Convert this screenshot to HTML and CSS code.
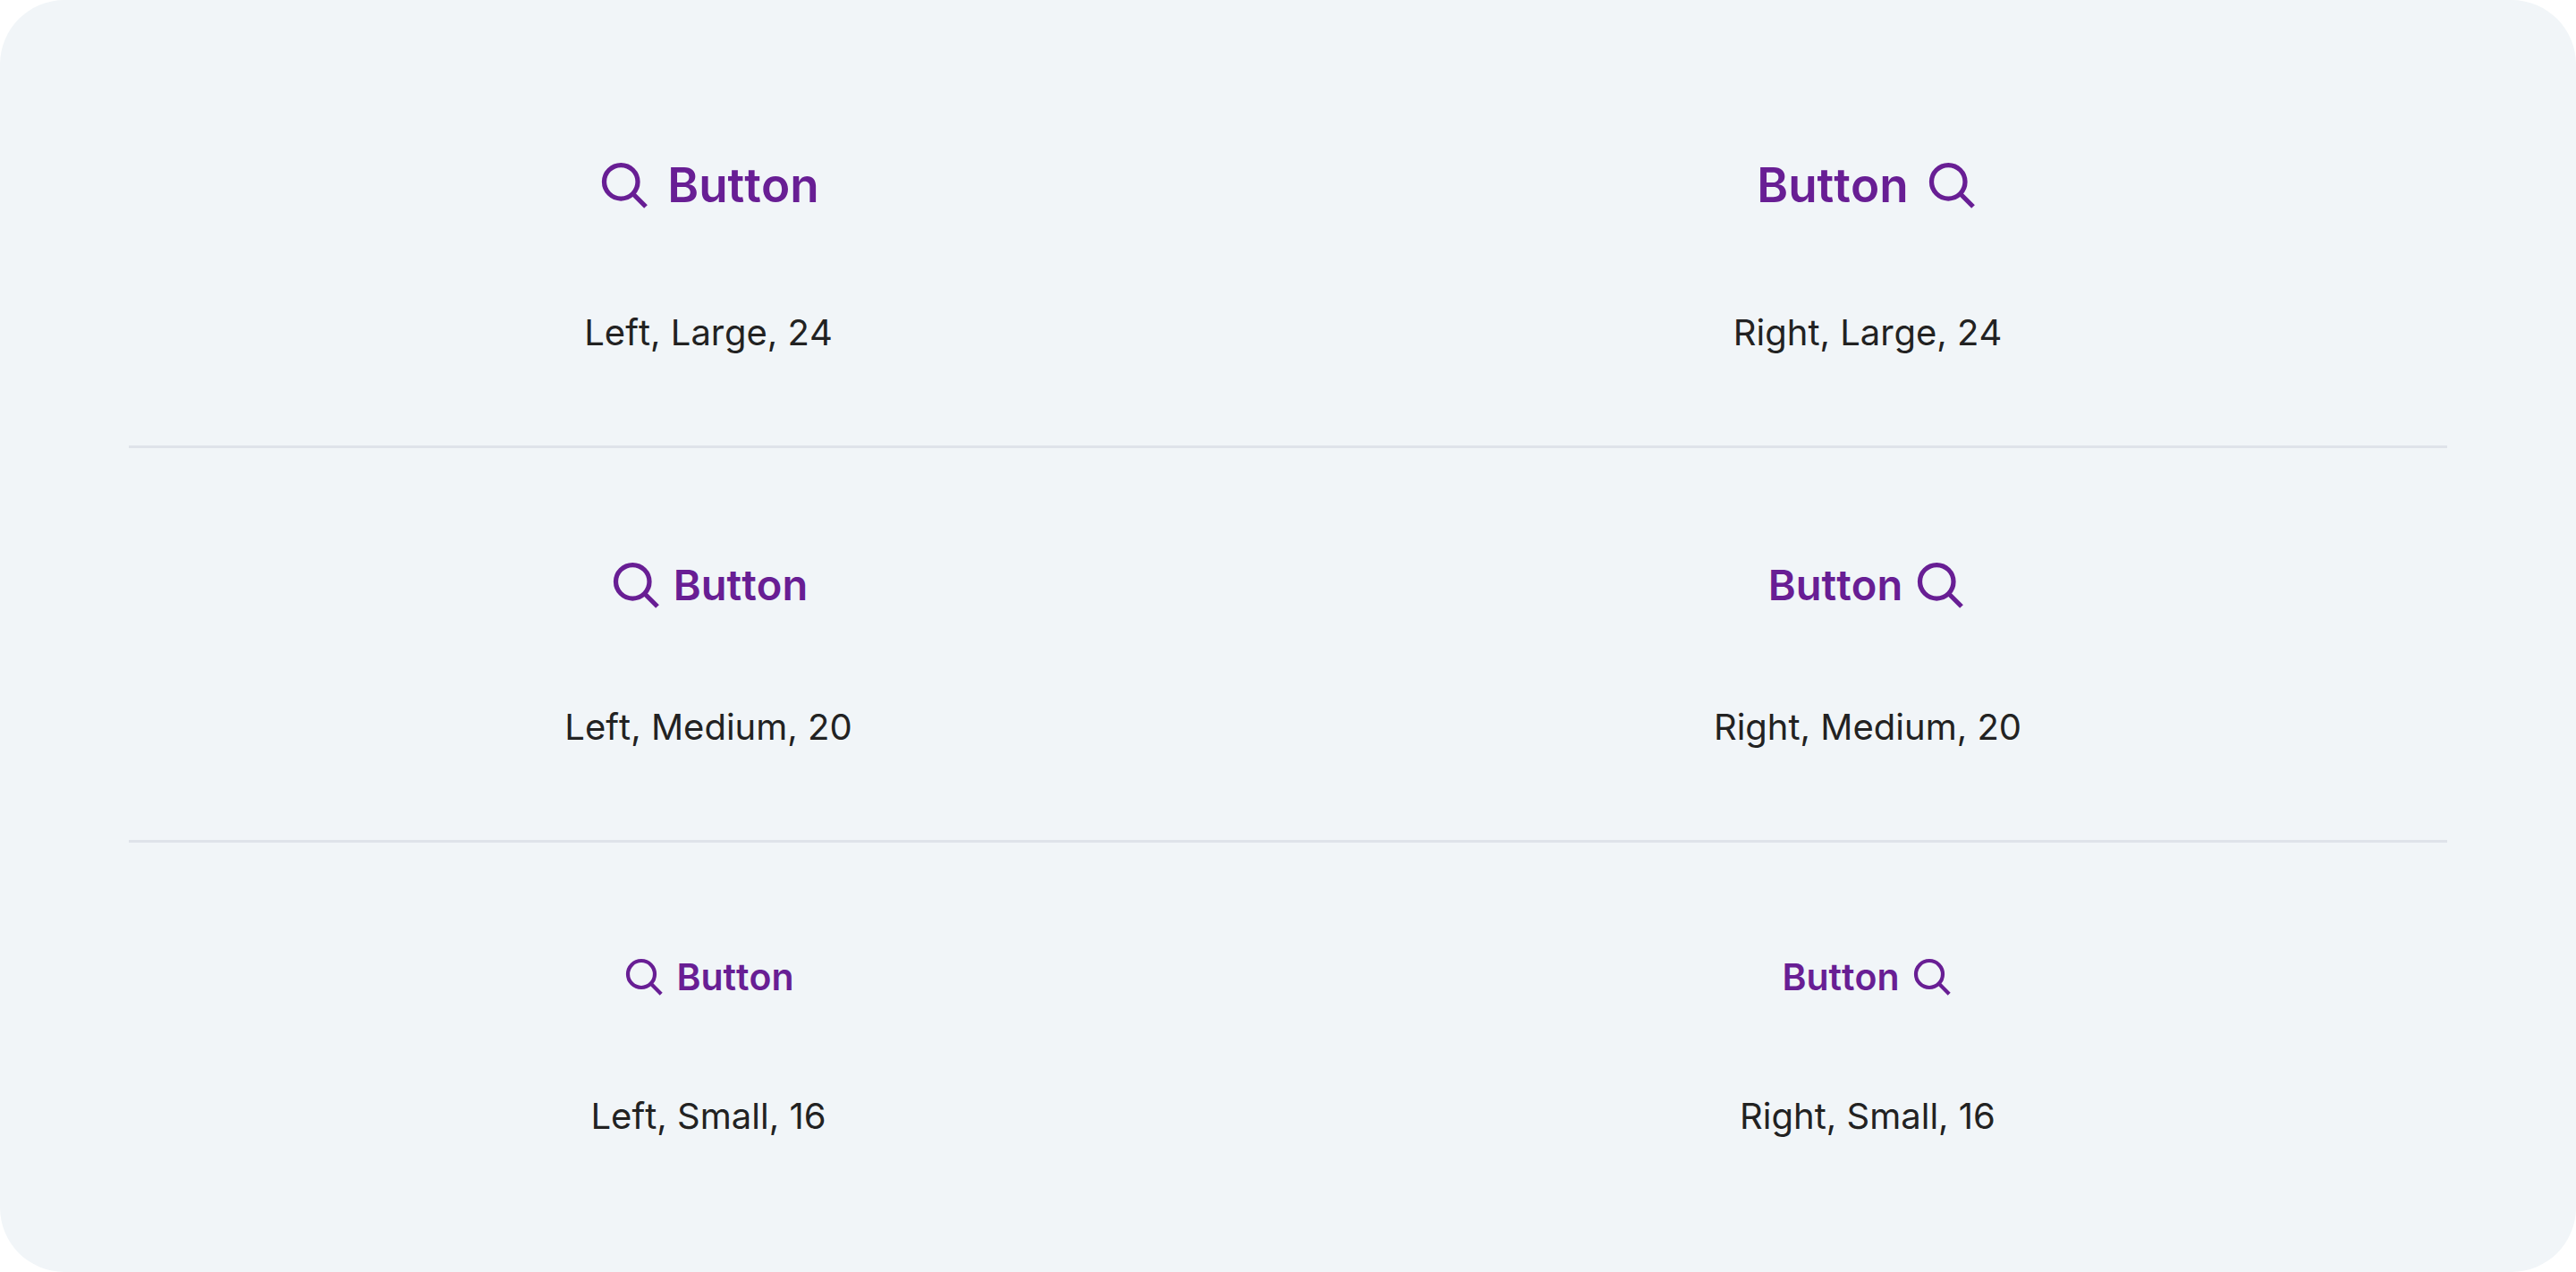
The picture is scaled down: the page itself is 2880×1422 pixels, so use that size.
FILE: index.html
```html
<!DOCTYPE html>
<html lang="en">
<head>
<meta charset="utf-8">
<meta name="viewport" content="width=device-width, initial-scale=1">
<title>Text buttons with icons</title>
<link rel="stylesheet" href="styles.css">
</head>
<body>
<svg class="sprite" aria-hidden="true">
  <symbol id="search" viewBox="0 0 24 24">
    <g fill="none" stroke="currentColor" stroke-width="2.1">
      <circle cx="10.5" cy="10.5" r="7.5"/>
      <path d="M15.8 15.8 21.6 21.6"/>
    </g>
  </symbol>
</svg>
<main class="panel">
  <section class="row">
    <figure class="sample">
      <button type="button" class="btn btn-large"><svg class="icon" aria-hidden="true"><use href="#search"/></svg><span>Button</span></button>
      <figcaption class="caption">Left, Large, 24</figcaption>
    </figure>
    <figure class="sample">
      <button type="button" class="btn btn-large"><span>Button</span><svg class="icon" aria-hidden="true"><use href="#search"/></svg></button>
      <figcaption class="caption">Right, Large, 24</figcaption>
    </figure>
  </section>
  <section class="row">
    <figure class="sample">
      <button type="button" class="btn btn-medium"><svg class="icon" aria-hidden="true"><use href="#search"/></svg><span>Button</span></button>
      <figcaption class="caption">Left, Medium, 20</figcaption>
    </figure>
    <figure class="sample">
      <button type="button" class="btn btn-medium"><span>Button</span><svg class="icon" aria-hidden="true"><use href="#search"/></svg></button>
      <figcaption class="caption">Right, Medium, 20</figcaption>
    </figure>
  </section>
  <section class="row">
    <figure class="sample">
      <button type="button" class="btn btn-small"><svg class="icon" aria-hidden="true"><use href="#search"/></svg><span>Button</span></button>
      <figcaption class="caption">Left, Small, 16</figcaption>
    </figure>
    <figure class="sample">
      <button type="button" class="btn btn-small"><span>Button</span><svg class="icon" aria-hidden="true"><use href="#search"/></svg></button>
      <figcaption class="caption">Right, Small, 16</figcaption>
    </figure>
  </section>
</main>
</body>
</html>
```
FILE: styles.css
```css
*,
*::before,
*::after {
  box-sizing: border-box;
}

body {
  margin: 0;
  background: #ffffff;
  color: #222222;
  font-family: Inter, "Liberation Sans", sans-serif;
  font-kerning: none;
}

.sprite {
  display: none;
}

.panel {
  padding: 48px 5%;
  border-radius: 72px;
  background: #f1f5f8;
}

.row {
  display: grid;
  grid-template-columns: 1fr 1fr;
  padding: 96px 0;
}

.row + .row {
  border-top: 3px solid #dfe3ea;
}

.sample {
  display: flex;
  flex-direction: column;
  align-items: center;
  gap: 72px;
  margin: 0;
}

.caption {
  font-size: 40px;
  line-height: 60px;
}

.btn {
  display: inline-flex;
  align-items: center;
  padding: 24px 0;
  border: 0;
  background: none;
  color: #681e94;
  font-family: inherit;
  font-kerning: inherit;
  font-weight: 600;
  cursor: pointer;
}

.icon {
  flex: none;
  width: 60px;
  height: 60px;
}

.btn-large {
  gap: 18px;
  font-size: 53px;
  line-height: 78px;
}

.btn-medium {
  gap: 12px;
  font-size: 47px;
  line-height: 66px;
}

.btn-small {
  gap: 12px;
  font-size: 41px;
  line-height: 60px;
}

.btn-small .icon {
  width: 48px;
  height: 48px;
}
```
